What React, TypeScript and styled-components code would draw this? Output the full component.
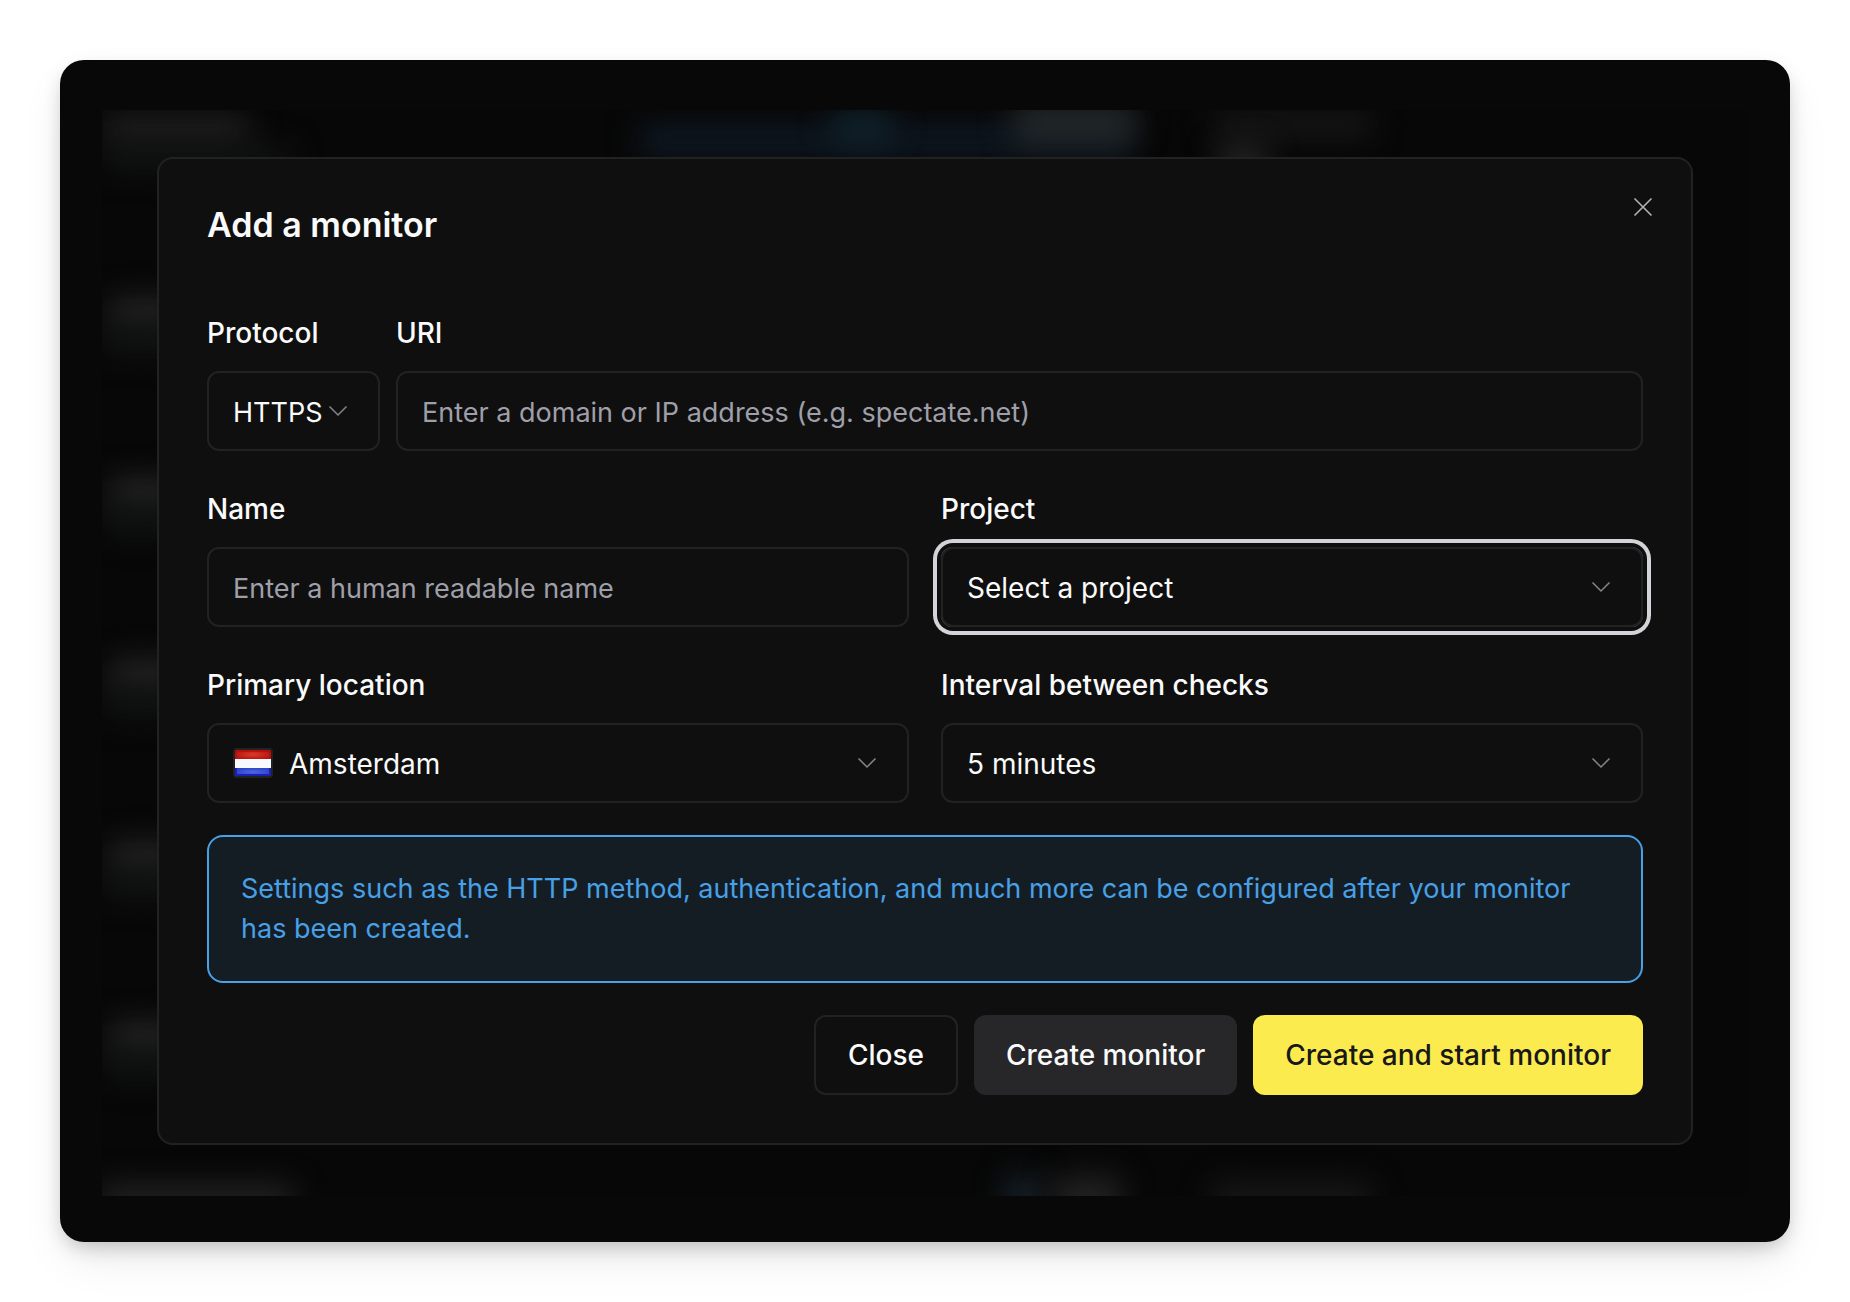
import React from "react";
import styled, { createGlobalStyle, css } from "styled-components";

const font = `Inter, "Liberation Sans", sans-serif`;
const color = {
  stage: "#080808",
  panel: "#0f0f0f",
  line: "#222223",
  text: "#fafafa",
  muted: "#9f9fa9",
  ring: "#d4d4d8",
  info: "#48a0e6",
  infoBg: "#151d24",
  secondary: "#27272a",
  primary: "#fbeb4f",
};

const GlobalStyle = createGlobalStyle`
  *, *::before, *::after { box-sizing: border-box; }
  body { margin: 0; background: #ffffff; font-family: ${font}; }
`;

const Page = styled.div`
  padding: 60px;
`;

const Stage = styled.main`
  position: relative;
  padding: 97px;
  border-radius: 24px;
  background: ${color.stage};
  box-shadow: 0 20px 48px -8px rgba(0, 0, 0, 0.1), 0 8px 20px -4px rgba(0, 0, 0, 0.22);
`;

const Backdrop = styled.div`
  position: absolute;
  inset: 50px 42px 46px;
  overflow: hidden;
  background: #070707;
`;

const Glow = styled.span<{ $x: number; $y: number; $w: number; $h: number; $tint: string }>`
  position: absolute;
  left: ${(p) => p.$x}px;
  top: ${(p) => p.$y}px;
  width: ${(p) => p.$w}px;
  height: ${(p) => p.$h}px;
  border-radius: 8px;
  background: ${(p) => p.$tint};
  filter: blur(15px);
`;

const Dialog = styled.form`
  position: relative;
  display: flex;
  flex-direction: column;
  gap: 32px;
  padding: 48px;
  border: 2px solid ${color.line};
  border-radius: 16px;
  background: ${color.panel};
  color: ${color.text};
`;

const Title = styled.h1`
  margin: 0 0 32px;
  font-size: 34px;
  font-weight: 600;
  line-height: 36px;
`;

const IconButton = styled.button`
  position: absolute;
  top: 32px;
  right: 32px;
  display: grid;
  width: 32px;
  height: 32px;
  padding: 0;
  border: 0;
  background: none;
  color: #b4b4b5;
  cursor: pointer;
`;

const UriRow = styled.div`
  display: grid;
  grid-template-columns: 173px 1fr;
  gap: 16px;
`;

const HalfRow = styled.div`
  display: grid;
  grid-template-columns: 1fr 1fr;
  gap: 32px;
`;

const FieldBox = styled.div`
  display: flex;
  flex-direction: column;
  gap: 12px;
  min-width: 0;
`;

const Label = styled.label`
  font-size: 28px;
  font-weight: 500;
  line-height: 52px;
`;

const control = css`
  width: 100%;
  height: 80px;
  padding: 2px 24px 0;
  border: 2px solid ${color.line};
  border-radius: 12px;
  outline: none;
  background: transparent;
  color: ${color.text};
  font-family: ${font};
`;

const TextInput = styled.input`
  ${control}
  font-size: 27px;
  &::placeholder {
    color: ${color.muted};
    opacity: 1;
  }
`;

const SelectWrap = styled.div`
  position: relative;
  display: grid;
  align-items: center;
`;

const Select = styled.select<{ $flag?: boolean; $ring?: boolean; $compact?: boolean }>`
  ${control}
  appearance: none;
  font-size: ${(p) => (p.$compact ? 27 : 28)}px;
  ${(p) => p.$flag && "padding-left: 80px;"}
  ${(p) => p.$ring && `box-shadow: 0 0 0 4px ${color.panel}, 0 0 0 8px ${color.ring};`}
  option {
    background: ${color.panel};
  }
`;

const ChevronSlot = styled.span`
  position: absolute;
  right: 26px;
  display: grid;
  color: #858586;
  pointer-events: none;
`;

const FlagSlot = styled.span`
  position: absolute;
  left: 26px;
  display: grid;
  border: 2px solid ${color.line};
  border-radius: 4px;
  overflow: hidden;
  pointer-events: none;
`;

const Notice = styled.p`
  margin: 0;
  padding: 32px;
  border: 2px solid ${color.info};
  border-radius: 16px;
  background: ${color.infoBg};
  color: ${color.info};
  font-size: 27px;
  line-height: 40px;
`;

const Actions = styled.div`
  display: flex;
  justify-content: flex-end;
  gap: 16px;
`;

const Button = styled.button<{ $kind: "outline" | "secondary" | "primary" }>`
  height: 80px;
  padding: 0 32px;
  border: ${(p) => (p.$kind === "outline" ? `2px solid ${color.line}` : "0")};
  border-radius: 12px;
  background: ${(p) =>
    p.$kind === "primary" ? color.primary : p.$kind === "secondary" ? color.secondary : "transparent"};
  color: ${(p) => (p.$kind === "primary" ? "#18181b" : color.text)};
  font-family: ${font};
  font-size: 28px;
  font-weight: 500;
  white-space: nowrap;
  cursor: pointer;
`;

const Chevron = () => (
  <svg width="32" height="32" viewBox="0 0 32 32" fill="none" stroke="currentColor" strokeWidth="1.5" aria-hidden="true">
    <path d="M7.5 11.5l8.5 8.5 8.5-8.5" />
  </svg>
);

const Cross = () => (
  <svg width="32" height="32" viewBox="0 0 32 32" fill="none" stroke="currentColor" strokeWidth="1.6" aria-hidden="true">
    <path d="M7.5 7.5l17 17M24.5 7.5l-17 17" />
  </svg>
);

const DutchFlag = () => (
  <svg width="36" height="26" viewBox="0 0 36 26" aria-hidden="true">
    <defs>
      <radialGradient id="flagRed">
        <stop offset="0" stopColor="#dc3a2c" />
        <stop offset="1" stopColor="#bb1712" />
      </radialGradient>
      <radialGradient id="flagBlue">
        <stop offset="0" stopColor="#4d68dc" />
        <stop offset="1" stopColor="#2f45cc" />
      </radialGradient>
    </defs>
    <rect width="36" height="9" fill="url(#flagRed)" />
    <path d="M0 1h36M1 0v9M35 0v9" stroke="#a80e0a" strokeOpacity="0.6" strokeWidth="2" />
    <rect y="18" width="36" height="8" fill="url(#flagBlue)" />
    <path d="M0 25h36M1 18v8M35 18v8" stroke="#1414b8" strokeOpacity="0.8" strokeWidth="2" />
    <rect y="9" width="36" height="9" fill="#f8fbff" />
  </svg>
);

type SelectFieldProps = {
  id: string;
  label: string;
  value: string;
  flag?: boolean;
  ring?: boolean;
  compact?: boolean;
};

const SelectField = ({ id, label, value, flag, ring, compact }: SelectFieldProps) => (
  <FieldBox>
    <Label htmlFor={id}>{label}</Label>
    <SelectWrap>
      <Select id={id} $flag={flag} $ring={ring} $compact={compact}>
        <option>{value}</option>
      </Select>
      {flag && (
        <FlagSlot>
          <DutchFlag />
        </FlagSlot>
      )}
      <ChevronSlot>
        <Chevron />
      </ChevronSlot>
    </SelectWrap>
  </FieldBox>
);

const TextField = ({ id, label, placeholder }: { id: string; label: string; placeholder: string }) => (
  <FieldBox>
    <Label htmlFor={id}>{label}</Label>
    <TextInput id={id} type="text" placeholder={placeholder} />
  </FieldBox>
);

const listRows = [188, 368, 550, 732, 912];

export default function App() {
  return (
    <>
      <GlobalStyle />
      <Page>
        <Stage>
          <Backdrop aria-hidden="true">
            <Glow $x={0} $y={4} $w={148} $h={30} $tint="#202020" />
            <Glow $x={0} $y={36} $w={190} $h={24} $tint="#121413" />
            <Glow $x={536} $y={14} $w={494} $h={34} $tint="#0e1822" />
            <Glow $x={730} $y={0} $w={60} $h={34} $tint="#10222c" />
            <Glow $x={910} $y={-8} $w={124} $h={42} $tint="#22272a" />
            <Glow $x={1110} $y={0} $w={160} $h={28} $tint="#171717" />
            <Glow $x={1116} $y={38} $w={50} $h={28} $tint="#2a2a2a" />
            {listRows.map((y) => (
              <React.Fragment key={y}>
                <Glow $x={6} $y={y} $w={76} $h={30} $tint="#262626" />
                <Glow $x={0} $y={y + 28} $w={80} $h={28} $tint="#111412" />
              </React.Fragment>
            ))}
            <Glow $x={-4} $y={1074} $w={196} $h={34} $tint="#222222" />
            <Glow $x={904} $y={1066} $w={34} $h={44} $tint="#18242e" />
            <Glow $x={950} $y={1066} $w={70} $h={44} $tint="#222222" />
            <Glow $x={1110} $y={1072} $w={160} $h={34} $tint="#181818" />
          </Backdrop>
          <Dialog role="dialog" aria-labelledby="dialog-title" onSubmit={(e) => e.preventDefault()}>
            <Title id="dialog-title">Add a monitor</Title>
            <IconButton type="button" aria-label="Close dialog">
              <Cross />
            </IconButton>
            <UriRow>
              <SelectField id="protocol" label="Protocol" value="HTTPS" compact />
              <TextField id="uri" label="URI" placeholder="Enter a domain or IP address (e.g. spectate.net)" />
            </UriRow>
            <HalfRow>
              <TextField id="name" label="Name" placeholder="Enter a human readable name" />
              <SelectField id="project" label="Project" value="Select a project" ring />
            </HalfRow>
            <HalfRow>
              <SelectField id="location" label="Primary location" value="Amsterdam" flag />
              <SelectField id="interval" label="Interval between checks" value="5 minutes" />
            </HalfRow>
            <Notice>
              Settings such as the HTTP method, authentication, and much more can be configured after your monitor has
              been created.
            </Notice>
            <Actions>
              <Button type="button" $kind="outline">Close</Button>
              <Button type="button" $kind="secondary">Create monitor</Button>
              <Button type="submit" $kind="primary">Create and start monitor</Button>
            </Actions>
          </Dialog>
        </Stage>
      </Page>
    </>
  );
}
